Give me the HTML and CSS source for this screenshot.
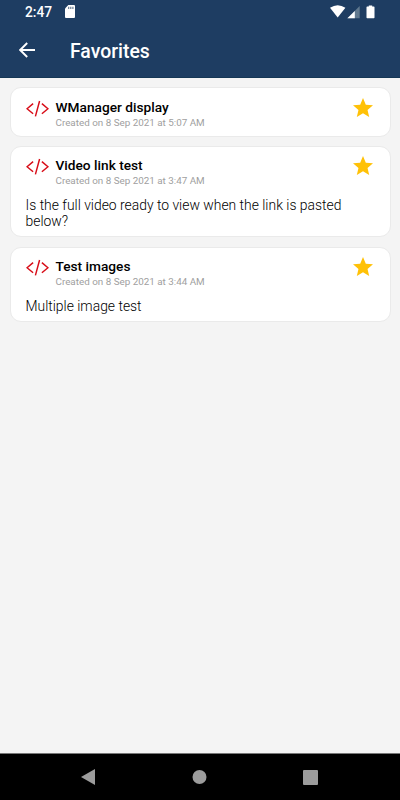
FILE: index.html
```html
<!DOCTYPE html>
<html lang="en">
<head>
<meta charset="utf-8">
<title>Favorites</title>
<link rel="stylesheet" href="styles.css">
</head>
<body>
<svg width="0" height="0" class="defs">
  <symbol id="code" viewBox="0 0 22 18"><path d="M6.8 3.6 1 8.7l5.8 5.1M15.2 3.6 21 8.7l-5.8 5.1M13 1 9 16.4" fill="none" stroke="#d80d18" stroke-width="1.4"/></symbol>
  <symbol id="star" viewBox="2 2 20 19"><path d="M12 17.27 18.18 21l-1.64-7.03L22 9.24l-7.19-.61L12 2 9.19 8.63 2 9.24l5.46 4.73L5.82 21z" fill="#ffc107"/></symbol>
</svg>
<header>
  <div class="status">
    <span class="time">2:47</span>
    <svg class="sd" width="10" height="13" viewBox="0 0 10 12" preserveAspectRatio="none"><path d="M3.3 0H9q1 0 1 1v10q0 1-1 1H1q-1 0-1-1V3.3z" fill="#fff"/><path d="M3.7 1.7v2.1M5.8 1.7v2.1M7.9 1.7v2.1" stroke="#5c7189" stroke-width="1.1"/></svg>
    <svg class="signals" width="46" height="14" viewBox="0 0 46 14"><path d="M0 2.8Q7.7-2.4 15.4 2.8L7.7 12.4z" fill="#fff"/><path d="M29.7 1v12.3H17.4z" fill="#61798f"/><path d="M24.8 5.9v7.4h-7.4z" fill="#fff"/><path d="M38.8.5h3.4v1h1.6q.7 0 .7.7v10.4q0 .7-.7.7h-6.6q-.7 0-.7-.7V2.2q0-.7.7-.7h1.6z" fill="#fff"/></svg>
  </div>
  <div class="bar">
    <svg class="back" width="16" height="16" viewBox="0 0 16 16"><path d="M16 8H1.4M8.2 1 1.2 8l7 7" fill="none" stroke="#fff" stroke-width="1.9"/></svg>
    <h1>Favorites</h1>
  </div>
</header>
<main>
  <article class="compact">
    <div class="head">
      <svg class="code" width="23" height="18" viewBox="0 0 22 18" preserveAspectRatio="none"><use href="#code" width="22" height="18"/></svg>
      <div class="meta"><h2>WManager display</h2><time>Created on 8 Sep 2021 at 5:07 AM</time></div>
      <svg class="star" width="20" height="19"><use href="#star"/></svg>
    </div>
  </article>
  <article>
    <div class="head">
      <svg class="code" width="23" height="18" viewBox="0 0 22 18" preserveAspectRatio="none"><use href="#code" width="22" height="18"/></svg>
      <div class="meta"><h2>Video link test</h2><time>Created on 8 Sep 2021 at 3:47 AM</time></div>
      <svg class="star" width="20" height="19"><use href="#star"/></svg>
    </div>
    <p>Is the full video ready to view when the link is pasted below?</p>
  </article>
  <article>
    <div class="head">
      <svg class="code" width="23" height="18" viewBox="0 0 22 18" preserveAspectRatio="none"><use href="#code" width="22" height="18"/></svg>
      <div class="meta"><h2>Test images</h2><time>Created on 8 Sep 2021 at 3:44 AM</time></div>
      <svg class="star" width="20" height="19"><use href="#star"/></svg>
    </div>
    <p>Multiple image test</p>
  </article>
</main>
<nav>
  <svg width="14" height="16" viewBox="0 0 14 16"><path d="M14 0v16L0 8z" fill="#9c9c9c"/></svg>
  <svg width="14" height="14" viewBox="0 0 14 14"><circle cx="7" cy="7" r="7" fill="#9c9c9c"/></svg>
  <svg width="15" height="15" viewBox="0 0 15 15"><rect width="15" height="15" rx="1" fill="#9c9c9c"/></svg>
</nav>
</body>
</html>
```
FILE: styles.css
```css
* { box-sizing: border-box; margin: 0; }
body {
  height: 800px;
  display: flex;
  flex-direction: column;
  background: #f4f4f4;
  font-family: Roboto, sans-serif;
  overflow: hidden;
}
svg { display: block; flex: none; }
.defs { display: none; }
header {
  height: 78px;
  background: #1e3d62;
  border-bottom: 1px solid #153755;
  color: #fff;
}
.status { height: 25px; display: flex; padding-left: 25px; }
.time { width: 40px; font-size: 13.8px; font-weight: 500; line-height: 25px; }
.sd { margin-top: 5px; }
.signals { margin: 5px 24px 0 auto; }
.bar { height: 52px; display: flex; align-items: center; padding-left: 19px; }
.back { margin-right: 35px; margin-bottom: 2px; }
h1 { font-size: 19.4px; font-weight: 500; line-height: 24px; padding-top: 2px; white-space: nowrap; }
main { flex: 1; display: flex; flex-direction: column; gap: 10px; padding: 9px 9.5px 0; }
article {
  background: #fff;
  border: 1px solid #eaeaea;
  border-radius: 11px;
  padding: 10px 15px 7px;
}
.compact { padding-top: 11px; margin-bottom: -1px; }
.head { display: flex; }
.code { margin: 1px 7px 0 0; }
.meta { flex: 1; white-space: nowrap; }
h2 { font-size: 13.7px; font-weight: 500; line-height: 17px; color: #000; }
time { display: block; font-size: 9.85px; line-height: 13px; color: #a0a0a0; }
.star { margin: -1px 1.5px 0 0; }
p { margin-top: 10px; font-size: 13.9px; font-weight: 300; line-height: 16px; color: #000; }
nav {
  height: 47px;
  background: #000;
  border-top: 1px solid #777;
  display: flex;
  align-items: center;
  justify-content: space-between;
  padding: 0 82px 0 81px;
}
nav circle { transform: translateX(.5px); }
nav svg { overflow: visible; }
```
